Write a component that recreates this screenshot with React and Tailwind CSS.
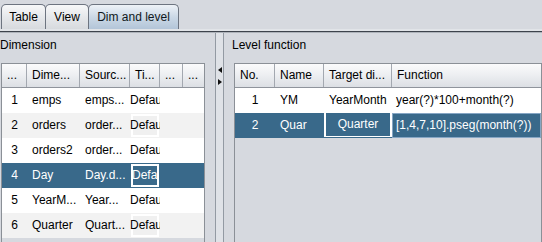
import React from "react";

const leftCols = [25, 53, 50, 30, 23, 21];
const leftHead = ["...", "Dime...", "Sourc...", "Ti...", "...", "..."];
const leftRows = [
  ["1", "emps", "emps..."],
  ["2", "orders", "order..."],
  ["3", "orders2", "order..."],
  ["4", "Day", "Day.d..."],
  ["5", "YearM...", "Year..."],
  ["6", "Quarter", "Quart..."],
];

const rightCols = [40, 49, 68, 149];
const rightHead = ["No.", "Name", "Target di...", "Function"];

function HeaderCell({ w, text, last }) {
  return (
    <div
      style={{ width: w }}
      className={
        "h-full shrink-0 flex items-center pl-[5px] overflow-hidden whitespace-nowrap bg-gradient-to-b from-[#fbfbfc] via-[#eceef1] to-[#dcdfe4] " +
        (last ? "" : "border-r border-[#a3a8b0]")
      }
    >
      {text}
    </div>
  );
}

function Tab({ label, selected, w }) {
  return (
    <div
      style={{ width: w }}
      className={
        "h-[25px] -mr-px shrink-0 flex items-center justify-center rounded-t-[5px] border border-b-0 border-[#6d7480] " +
        (selected
          ? "bg-gradient-to-b from-[#eef2f7] via-[#cbd8e6] to-[#b3c5d8] text-[#101820]"
          : "bg-gradient-to-b from-[#f7f8f9] via-[#e6e8eb] to-[#d7dade] text-black")
      }
    >
      {label}
    </div>
  );
}

export default function App() {
  return (
    <div className="w-[542px] h-[242px] overflow-hidden bg-[#d6d9df] text-[12px] leading-[15px] text-black font-['Liberation_Sans',Arial,sans-serif] flex flex-col">
      {/* tab bar */}
      <div className="h-[29px] pt-[4px] flex items-end pl-px shrink-0">
        <Tab label="Table" w={45} />
        <Tab label="View" w={44} />
        <Tab label="Dim and level" w={91} selected />
      </div>
      <div className="h-[2px] bg-[#e1e4e8] shrink-0" />
      <div className="h-px bg-[#3d434c] shrink-0" />
      <div className="h-px bg-[#aeb3ba] shrink-0" />

      {/* split pane */}
      <div className="flex flex-1 min-h-0">
        {/* left */}
        <div className="w-[215px] shrink-0 flex flex-col pt-[5px]">
          <div className="h-[15px] pl-0">Dimension</div>
          <div className="mt-[10px] ml-px w-[204px] flex-1 border-l border-t border-r border-[#8b9097] flex flex-col">
            <div className="h-[24px] flex border-b border-[#8f949c] shrink-0">
              {leftHead.map((t, i) => (
                <HeaderCell key={i} w={leftCols[i]} text={t} last={i === leftCols.length - 1} />
              ))}
            </div>
            {leftRows.map((r, i) => {
              const sel = i === 3;
              const bg = sel ? "bg-[#39698a] text-white" : i % 2 === 1 ? "bg-[#f2f2f2]" : "bg-white";
              return (
                <div key={i} className={"h-[25px] flex shrink-0 " + bg}>
                  <div style={{ width: leftCols[0] }} className="shrink-0 flex items-center justify-center">{r[0]}</div>
                  <div style={{ width: leftCols[1] }} className="shrink-0 flex items-center pl-[5px] whitespace-nowrap overflow-hidden">{r[1]}</div>
                  <div style={{ width: leftCols[2] }} className="shrink-0 flex items-center pl-[5px] whitespace-nowrap overflow-hidden">{r[2]}</div>
                  <div style={{ width: leftCols[3] }} className="shrink-0 py-[1px] px-[1px] overflow-hidden">
                    <div
                      className={
                        "h-full border-2 border-white flex items-center whitespace-nowrap " +
                        (sel ? "bg-[#39698a] overflow-hidden" : i % 2 === 1 ? "bg-[#f0f0f0] overflow-visible" : "bg-white overflow-visible")
                      }
                    >
                      <span className={sel ? "-ml-px" : "-ml-[3px]"}>Default</span>
                    </div>
                  </div>
                  <div style={{ width: leftCols[4] }} className="shrink-0" />
                  <div style={{ width: leftCols[5] }} className="shrink-0" />
                </div>
              );
            })}
          </div>
        </div>

        {/* divider */}
        <div className="w-[9px] shrink-0 border-x border-[#939aa3] bg-[#dfe2e7] flex flex-col items-center pt-[34px] gap-[6px]">
          <svg width="4" height="6" viewBox="0 0 4 6">
            <polygon points="4,0 4,6 0,3" fill="#111" />
          </svg>
          <svg width="4" height="6" viewBox="0 0 4 6">
            <polygon points="0,0 0,6 4,3" fill="#111" />
          </svg>
        </div>

        {/* right */}
        <div className="flex-1 flex flex-col pt-[5px]">
          <div className="h-[15px] pl-[8px]">Level function</div>
          <div className="mt-[10px] ml-[10px] w-[308px] flex-1 border-l border-t border-r border-[#8b9097] flex flex-col">
            <div className="h-[24px] flex border-b border-[#8f949c] shrink-0">
              {rightHead.map((t, i) => (
                <HeaderCell key={i} w={rightCols[i]} text={t} last={i === rightCols.length - 1} />
              ))}
            </div>
            <div className="h-[25px] flex shrink-0 bg-white">
              <div style={{ width: rightCols[0] }} className="shrink-0 flex items-center justify-center">1</div>
              <div style={{ width: rightCols[1] }} className="shrink-0 flex items-center pl-[5px]">YM</div>
              <div style={{ width: rightCols[2] }} className="shrink-0 flex items-center pl-[5px] whitespace-nowrap overflow-hidden">YearMonth</div>
              <div style={{ width: rightCols[3] }} className="shrink-0 flex items-center pl-[4px] whitespace-nowrap overflow-hidden">year(?)*100+month(?)</div>
            </div>
            <div className="h-[25px] flex shrink-0 bg-[#39698a] text-white">
              <div style={{ width: rightCols[0] }} className="shrink-0 flex items-center justify-center">2</div>
              <div style={{ width: rightCols[1] }} className="shrink-0 flex items-center pl-[5px]">Quar</div>
              <div style={{ width: rightCols[2] }} className="shrink-0 pb-px">
                <div className="h-full border-x-2 border-b border-white flex items-center justify-center whitespace-nowrap overflow-hidden">Quarter</div>
              </div>
              <div style={{ width: rightCols[3] }} className="shrink-0 flex items-center pl-[3px] border border-[#86a6c4] whitespace-nowrap overflow-hidden">[1,4,7,10].pseg(month(?))</div>
            </div>
          </div>
        </div>
      </div>
    </div>
  );
}
